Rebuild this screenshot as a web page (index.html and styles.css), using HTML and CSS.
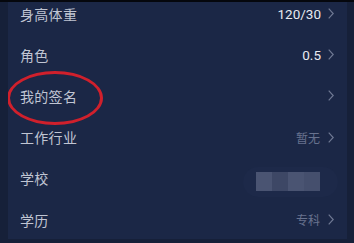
FILE: index.html
```html
<!DOCTYPE html>
<html lang="zh">
<head>
<meta charset="utf-8">
<link rel="stylesheet" href="styles.css">
</head>
<body>
<div class="screen">
  <div class="topbar"></div>
  <div class="panel">
    <ul class="list">
      <li class="row"><span class="label">身高体重</span><span class="value num">120/30</span><svg class="chev" viewBox="0 0 6 11"><polyline points="0.7,0.7 5.2,5.5 0.7,10.3"/></svg></li>
      <li class="row"><span class="label">角色</span><span class="value num">0.5</span><svg class="chev" viewBox="0 0 6 11"><polyline points="0.7,0.7 5.2,5.5 0.7,10.3"/></svg></li>
      <li class="row"><span class="label">我的签名</span><span class="value"></span><svg class="chev" viewBox="0 0 6 11"><polyline points="0.7,0.7 5.2,5.5 0.7,10.3"/></svg><span class="circle"></span></li>
      <li class="row"><span class="label">工作行业</span><span class="value dim">暂无</span><svg class="chev" viewBox="0 0 6 11"><polyline points="0.7,0.7 5.2,5.5 0.7,10.3"/></svg></li>
      <li class="row"><span class="label">学校</span><span class="value"></span><svg class="chev" viewBox="0 0 6 11"><polyline points="0.7,0.7 5.2,5.5 0.7,10.3"/></svg>
        <span class="mosaic"><i class="b1"></i><i class="b2"></i><i class="b3"></i><i class="b4"></i></span></li>
      <li class="row"><span class="label">学历</span><span class="value dim">专科</span><svg class="chev" viewBox="0 0 6 11"><polyline points="0.7,0.7 5.2,5.5 0.7,10.3"/></svg></li>
    </ul>
  </div>
</div>
</body>
</html>
```
FILE: styles.css
```css
* { box-sizing: border-box; }
html, body { margin: 0; padding: 0; }
body {
  width: 354px;
  height: 243px;
  overflow: hidden;
  background: #151e36;
  font-family: "Noto Sans CJK SC", "Noto Sans", sans-serif;
}
.screen {
  position: relative;
  width: 354px;
  height: 243px;
  overflow: hidden;
  background: #162039;
}
.topbar {
  position: absolute;
  left: 0; top: 0;
  width: 354px;
  height: 2px;
  background: #05070d;
  z-index: 5;
}
.panel {
  margin-left: 8px;
  width: 339px;
  height: 239px;
  background: #1b2746;
  overflow: hidden;
}
.list {
  list-style: none;
  margin: -7px 0 0 0;
  padding: 0;
}
.row {
  position: relative;
  display: flex;
  align-items: center;
  height: 41.2px;
  padding: 0 13px 0 12px;
}
.label {
  flex: 1;
  font-size: 14px;
  color: #c0c5d3;
  letter-spacing: 0.3px;
}
.value {
  font-size: 12.5px;
  color: #e4e6ec;
  margin-right: 7px;
}
.value.num {
  font-family: Roboto, "Noto Sans", sans-serif;
  font-size: 13.5px;
  color: #e8eaf0;
}
.value.dim {
  color: #68728e;
  font-size: 12px;
  margin-right: 8px;
}
.chev {
  width: 6px;
  height: 11px;
  fill: none;
  stroke: #6f7893;
  stroke-width: 1.2;
}
.circle {
  position: absolute;
  left: -1px;
  top: -4px;
  width: 96px;
  height: 54px;
  border: 3px solid #d0202c;
  border-radius: 50%;
}
.mosaic {
  position: absolute;
  left: 235px;
  top: 9px;
  width: 95px;
  height: 30px;
  border-radius: 15px;
  background: #1d2949;
  display: flex;
  align-items: center;
  padding-left: 13px;
}
.mosaic i {
  display: block;
  width: 16px;
  height: 19px;
}
.mosaic .b1 { background: #4a5472; }
.mosaic .b2 { background: #3d4765; }
.mosaic .b3 { background: #4a5472; }
.mosaic .b4 { background: #454f6d; }
```
